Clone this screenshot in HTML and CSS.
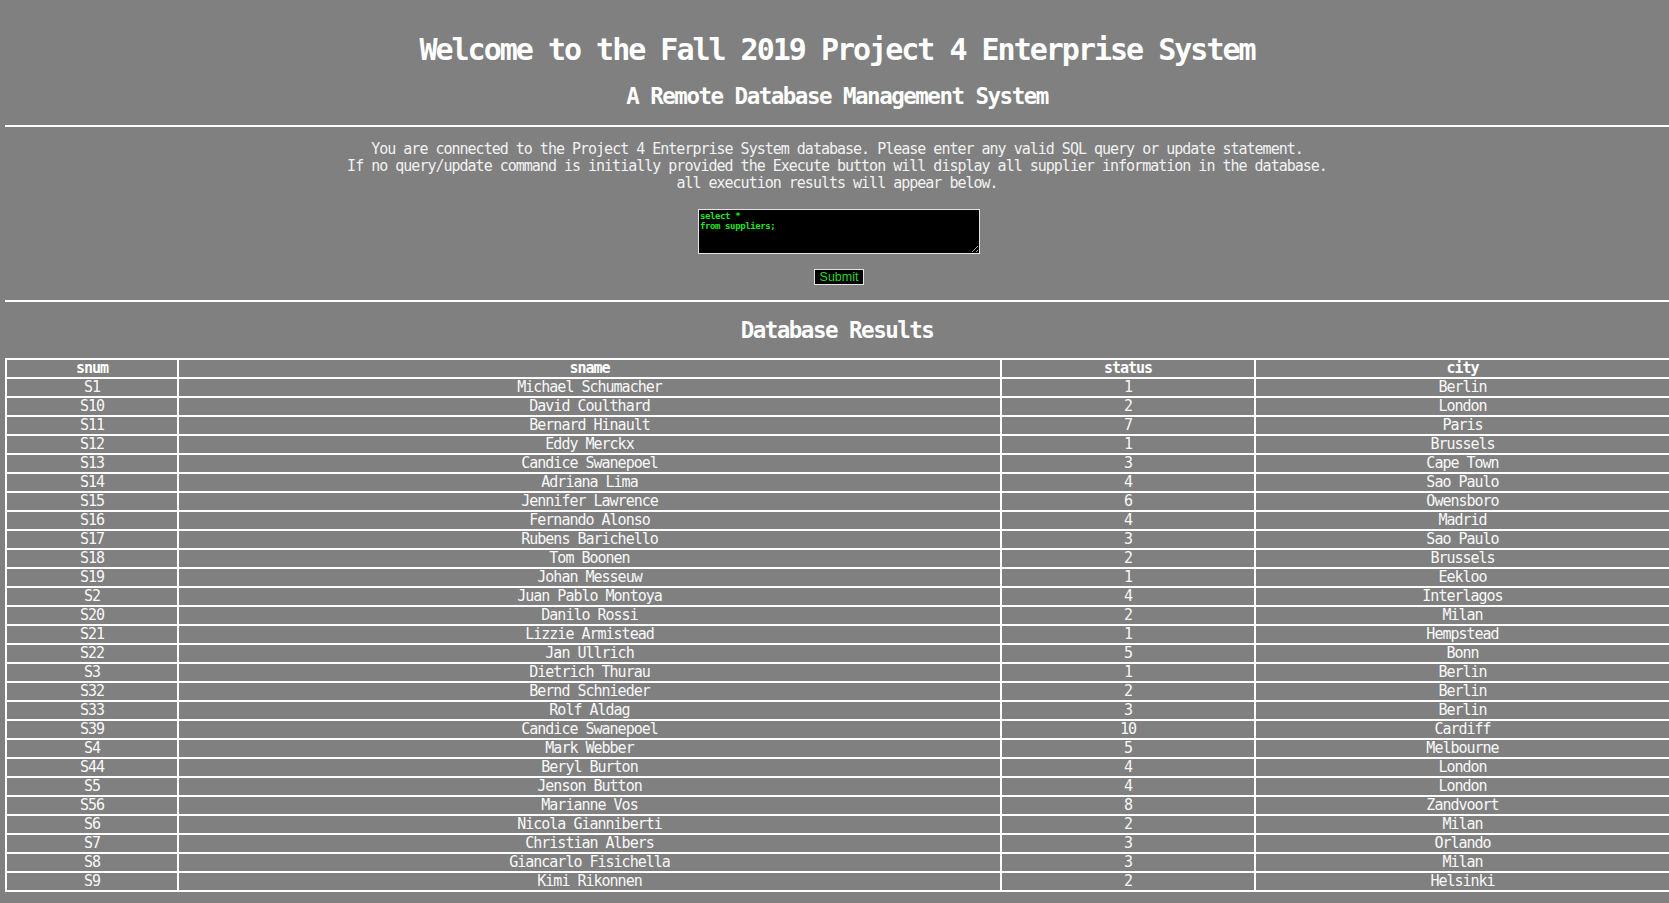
FILE: index.html
```html
<!DOCTYPE html>
<html lang="en">
<head>
<meta charset="utf-8">
<title>Project 4 Enterprise System</title>
<link rel="stylesheet" href="styles.css">
</head>
<body>
<header class="intro">
  <h1 class="title">Welcome to the Fall 2019 Project 4 Enterprise System</h1>
  <h2 class="subtitle">A Remote Database Management System</h2>
</header>
<hr class="rule">
<section class="query">
  <p class="info">You are connected to the Project 4 Enterprise System database. Please enter any valid SQL query or update statement.<br>If no query/update command is initially provided the Execute button will display all supplier information in the database.<br>all execution results will appear below.</p>
  <form class="query-form">
    <textarea class="sql" name="sql">select *
from suppliers;</textarea>
    <button class="submit" type="button">Submit</button>
  </form>
</section>
<hr class="rule">
<h2 class="subtitle results-title">Database Results</h2>
<table class="results">
  <colgroup>
    <col class="c-snum"><col class="c-sname"><col class="c-status"><col class="c-city">
  </colgroup>
  <thead>
    <tr><th>snum</th><th>sname</th><th>status</th><th>city</th></tr>
  </thead>
  <tbody>
    <tr><td>S1</td><td>Michael Schumacher</td><td>1</td><td>Berlin</td></tr>
    <tr><td>S10</td><td>David Coulthard</td><td>2</td><td>London</td></tr>
    <tr><td>S11</td><td>Bernard Hinault</td><td>7</td><td>Paris</td></tr>
    <tr><td>S12</td><td>Eddy Merckx</td><td>1</td><td>Brussels</td></tr>
    <tr><td>S13</td><td>Candice Swanepoel</td><td>3</td><td>Cape Town</td></tr>
    <tr><td>S14</td><td>Adriana Lima</td><td>4</td><td>Sao Paulo</td></tr>
    <tr><td>S15</td><td>Jennifer Lawrence</td><td>6</td><td>Owensboro</td></tr>
    <tr><td>S16</td><td>Fernando Alonso</td><td>4</td><td>Madrid</td></tr>
    <tr><td>S17</td><td>Rubens Barichello</td><td>3</td><td>Sao Paulo</td></tr>
    <tr><td>S18</td><td>Tom Boonen</td><td>2</td><td>Brussels</td></tr>
    <tr><td>S19</td><td>Johan Messeuw</td><td>1</td><td>Eekloo</td></tr>
    <tr><td>S2</td><td>Juan Pablo Montoya</td><td>4</td><td>Interlagos</td></tr>
    <tr><td>S20</td><td>Danilo Rossi</td><td>2</td><td>Milan</td></tr>
    <tr><td>S21</td><td>Lizzie Armistead</td><td>1</td><td>Hempstead</td></tr>
    <tr><td>S22</td><td>Jan Ullrich</td><td>5</td><td>Bonn</td></tr>
    <tr><td>S3</td><td>Dietrich Thurau</td><td>1</td><td>Berlin</td></tr>
    <tr><td>S32</td><td>Bernd Schnieder</td><td>2</td><td>Berlin</td></tr>
    <tr><td>S33</td><td>Rolf Aldag</td><td>3</td><td>Berlin</td></tr>
    <tr><td>S39</td><td>Candice Swanepoel</td><td>10</td><td>Cardiff</td></tr>
    <tr><td>S4</td><td>Mark Webber</td><td>5</td><td>Melbourne</td></tr>
    <tr><td>S44</td><td>Beryl Burton</td><td>4</td><td>London</td></tr>
    <tr><td>S5</td><td>Jenson Button</td><td>4</td><td>London</td></tr>
    <tr><td>S56</td><td>Marianne Vos</td><td>8</td><td>Zandvoort</td></tr>
    <tr><td>S6</td><td>Nicola Gianniberti</td><td>2</td><td>Milan</td></tr>
    <tr><td>S7</td><td>Christian Albers</td><td>3</td><td>Orlando</td></tr>
    <tr><td>S8</td><td>Giancarlo Fisichella</td><td>3</td><td>Milan</td></tr>
    <tr><td>S9</td><td>Kimi Rikonnen</td><td>2</td><td>Helsinki</td></tr>
  </tbody>
</table>
</body>
</html>
```
FILE: styles.css
```css
html {
  overflow-x: hidden;
  background: #808080;
}

body {
  margin: 0;
  padding: 0 0 0 5px;
  background: #808080;
  color: #ffffff;
  font-family: "DejaVu Sans Mono", monospace;
  font-size: 15px;
  letter-spacing: -1px;
}

.intro {
  padding-top: 32px;
}

.title {
  margin: 0;
  font-size: 30px;
  line-height: 36px;
  letter-spacing: -2px;
  font-weight: bold;
  text-align: center;
  color: #ffffff;
}

.subtitle {
  margin: 14px 0 15px;
  font-size: 22.5px;
  line-height: 28px;
  letter-spacing: -1.5px;
  font-weight: bold;
  text-align: center;
  color: #ffffff;
}

.rule {
  margin: 0;
  height: 2px;
  border: 0;
  background: #ffffff;
}

.query {
  display: flex;
  flex-direction: column;
  align-items: center;
  padding: 14px 0 15px;
}

.info {
  margin: 0;
  line-height: 17px;
  text-align: center;
  color: #f2f2f2;
}

.query-form {
  display: flex;
  flex-direction: column;
  align-items: center;
  gap: 15px;
  margin-top: 17px;
  padding-left: 4px;
}

.sql {
  box-sizing: border-box;
  width: 282px;
  height: 45px;
  margin: 0;
  padding: 1px 1px;
  border: 1px solid #e4e4e4;
  background: #000000;
  color: #22e022;
  font-family: "DejaVu Sans Mono", monospace;
  font-size: 9px;
  font-weight: bold;
  line-height: 10px;
  letter-spacing: -0.4px;
  resize: both;
  outline: none;
}

.submit {
  box-sizing: border-box;
  height: 16px;
  margin: 0;
  padding: 0 5px;
  border: 1px solid #e4e4e4;
  background: #000000;
  color: #22d822;
  font-family: "Liberation Sans", Arial, sans-serif;
  font-size: 12.5px;
  line-height: 14px;
  letter-spacing: 0;
}

.results-title {
  margin: 14px 0 14px;
}

.results {
  table-layout: fixed;
  width: 1666px;
  border: 1px solid #ffffff;
  border-spacing: 0;
  color: #f8f8f8;
}

.c-snum { width: 172px; }
.c-sname { width: 823px; }
.c-status { width: 254px; }
.c-city { width: 415px; }

.results th,
.results td {
  height: 17px;
  padding: 0;
  border: 1px solid #ffffff;
  line-height: 17px;
  text-align: center;
  white-space: nowrap;
}

.results th {
  font-weight: bold;
  color: #ffffff;
}
```
